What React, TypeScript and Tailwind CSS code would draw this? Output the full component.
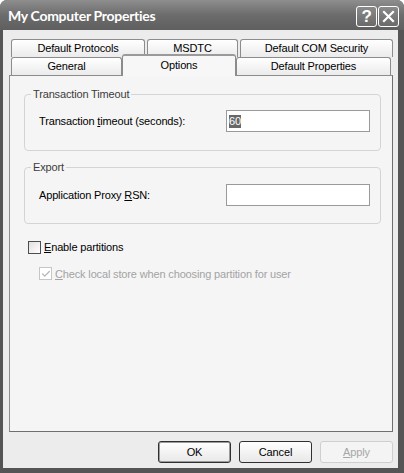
import { Check } from 'lucide-react';

const font = { fontFamily: '"Liberation Sans", Arial, sans-serif' };

function Tab({ label, w, selected }: { label: string; w: string; selected?: boolean }) {
  if (selected) {
    return (
      <div
        className={`${w} relative z-10 -mt-[3px] -mb-[1px] h-[22px] rounded-t-[3px] border border-b-0 border-t-2 border-[#8c8c8c] border-t-[#9a9a9a] bg-[#f7f7f7] flex justify-center pt-[1px] text-[11px] text-black`}
      >
        {label}
      </div>
    );
  }
  return (
    <div
      className={`${w} h-[18px] rounded-t-[3px] border border-b-0 border-[#8c8c8c] bg-gradient-to-b from-white to-[#ebebeb] flex items-center justify-center text-[11px] text-black`}
    >
      {label}
    </div>
  );
}

function GroupBox({ title, children, className }: { title: string; children: React.ReactNode; className?: string }) {
  return (
    <fieldset className={`border border-[#d4d4d4] rounded-[4px] ml-[14px] mr-[11px] pl-[14px] pr-[10px] ${className ?? ''}`}>
      <legend className="-ml-[8px] px-[2px] text-[11px] leading-[13px] text-[#3c3c3c]">{title}</legend>
      {children}
    </fieldset>
  );
}

function Button({ children, isDefault, disabled }: { children: React.ReactNode; isDefault?: boolean; disabled?: boolean }) {
  return (
    <div
      className={`w-[73px] h-[22px] rounded-[3px] flex items-center justify-center text-[11px] ${
        disabled
          ? 'border border-[#cfcfcf] bg-[#f4f4f4] text-[#a6a6a6]'
          : isDefault
          ? 'border border-[#303030] bg-gradient-to-b from-white to-[#e8e8e8] text-black shadow-[inset_0_0_0_1px_#9c9c9c]'
          : 'border border-[#303030] bg-gradient-to-b from-white to-[#e8e8e8] text-black'
      }`}
    >
      {children}
    </div>
  );
}

export default function App() {
  return (
    <div className="w-[404px] h-[473px] bg-white tracking-[-0.15px]" style={font}>
      <div className="flex flex-col h-full rounded-t-[7px] bg-[#555555] overflow-hidden">
        {/* title bar */}
        <div className="h-[30px] shrink-0 flex items-center pl-[8px] pr-[5px] bg-gradient-to-b from-[#8e8e8e] via-[#6c6c6c] to-[#5f5f5f]">
          <span className="flex-1 text-white text-[14px] font-bold tracking-[-0.3px]" style={{ fontFamily: 'Lato, "Liberation Sans", sans-serif' }}>
            My Computer Properties
          </span>
          <div className="flex gap-[1px] pt-[2px]">
            <div className="w-[21px] h-[21px] rounded-[3px] border border-white bg-gradient-to-b from-[#8a8a8a] to-[#6a6a6a] flex items-center justify-center text-white text-[17px] font-bold leading-none">?</div>
            <div className="w-[21px] h-[21px] rounded-[3px] border border-white bg-gradient-to-b from-[#8a8a8a] to-[#6a6a6a] flex items-center justify-center">
              <svg width="13" height="13" viewBox="0 0 13 13">
                <path d="M2 2 L11 11 M11 2 L2 11" stroke="white" strokeWidth="2.2" strokeLinecap="square" />
              </svg>
            </div>
          </div>
        </div>

        {/* frame + body */}
        <div className="flex-1 flex pl-[3px] pr-[6px] pb-[5px]">
          <div className="flex-1 bg-[#ececec] flex flex-col pl-[6px] pr-[5px] pt-[9px]">
            {/* tabs */}
            <div className="flex gap-[2px] pl-[2px]">
              <Tab label="Default Protocols" w="w-[134px]" />
              <Tab label="MSDTC" w="w-[91px]" />
              <Tab label="Default COM Security" w="w-[153px]" />
            </div>
            <div className="flex pl-[2px]">
              <Tab label="General" w="w-[111px]" />
              <Tab label="Options" w="w-[114px]" selected />
              <Tab label="Default Properties" w="w-[155px]" />
            </div>

            {/* pane */}
            <div className="h-[357px] border border-[#8c8c8c] border-r-[#6f6f6f] border-b-[#6f6f6f] bg-[#f5f5f5] flex flex-col text-[11px] text-black pt-[12px]">
              <GroupBox title="Transaction Timeout" className="pt-[9px] pb-[18px]">
                <div className="flex items-center">
                  <span className="flex-1">
                    Transaction <u>t</u>imeout (seconds):
                  </span>
                  <div className="w-[144px] h-[22px] border border-[#9a9a9a] bg-white flex items-center pl-[2px]">
                    <span className="bg-[#686868] text-white leading-[13px]">60</span>
                  </div>
                </div>
              </GroupBox>

              <GroupBox title="Export" className="mt-[10px] pt-[10px] pb-[17px]">
                <div className="flex items-center">
                  <span className="flex-1">
                    Application Proxy <u>R</u>SN:
                  </span>
                  <div className="w-[144px] h-[22px] border border-[#9a9a9a] bg-white" />
                </div>
              </GroupBox>

              <div className="flex items-center ml-[18px] mt-[15px]">
                <div className="w-[13px] h-[13px] border border-[#4d4d4d] bg-gradient-to-br from-[#e0e0e0] to-white" />
                <span className="ml-[3px]">
                  <u>E</u>nable partitions
                </span>
              </div>
              <div className="flex items-center ml-[29px] mt-[10px] text-[#a3a3a3]">
                <div className="w-[13px] h-[13px] border border-[#c6c6c6] bg-white flex items-center justify-center">
                  <Check className="w-[10px] h-[10px] text-[#b5b5b5]" strokeWidth={3} />
                </div>
                <span className="ml-[3px]">
                  <u>C</u>heck local store when choosing partition for user
                </span>
              </div>
            </div>

            {/* buttons */}
            <div className="flex justify-end gap-[8px] mt-[9px]">
              <Button isDefault>OK</Button>
              <Button>Cancel</Button>
              <Button disabled>
                <span>
                  <u>A</u>pply
                </span>
              </Button>
            </div>
          </div>
        </div>
      </div>
    </div>
  );
}
